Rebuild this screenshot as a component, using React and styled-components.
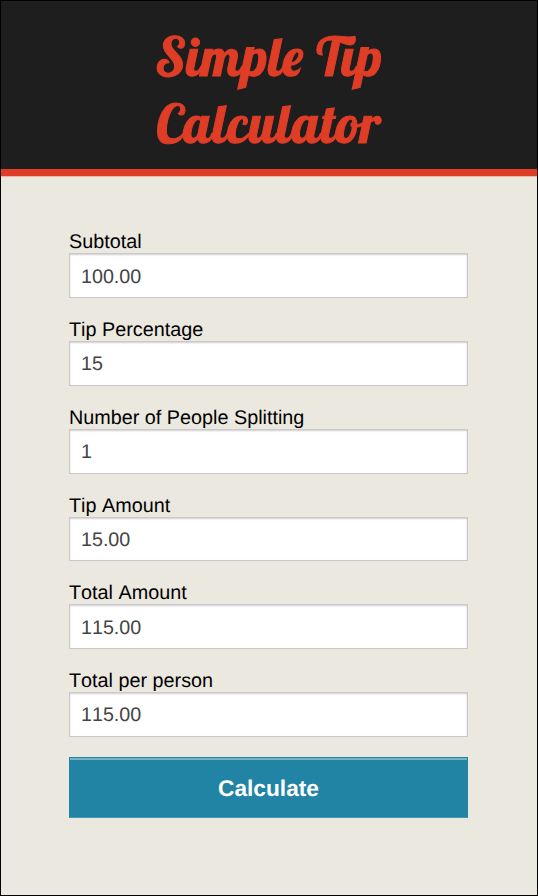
import React from "react";
import styled, { createGlobalStyle } from "styled-components";

const GlobalStyle = createGlobalStyle`
  *, *::before, *::after { box-sizing: border-box; }
  body {
    margin: 0;
    background: #ebe8e0;
    font-family: "Liberation Sans", Arial, sans-serif;
    text-rendering: geometricPrecision;
  }
`;

const Page = styled.main`
  height: 896px;
  border: 1px solid #000;
  background: #ebe8e0;
`;

const Header = styled.header`
  height: 175px;
  padding-top: 23px;
  background: #1e1e1e;
  border-bottom: 7px solid #df3d26;
  box-shadow: 0 1px 0 #ebb5a7;
`;

const Title = styled.h1`
  width: 260px;
  margin: 0 auto;
  font: normal 53.3px/66.6px Lobster, "Liberation Serif", serif;
  letter-spacing: 0.9px;
  font-feature-settings: "liga" 1, "clig" 1;
  -webkit-text-stroke: 1px #df3d26;
  color: #df3d26;
  text-align: center;
`;

const Form = styled.form`
  margin: 0;
  padding: 53.25px 69px 0 68px;
`;

const Field = styled.label`
  display: block;
  height: 87.75px;
`;

const Caption = styled.span`
  display: block;
  height: 24px;
  font-size: 19.8px;
  line-height: 26px;
  font-kerning: none;
  color: #000;
`;

const Input = styled.input`
  display: block;
  width: 399px;
  height: 44.75px;
  margin: 0;
  padding: 3px 11px 0;
  border: 1px solid #c9c9c9;
  border-radius: 0;
  outline: 0;
  background: #fff;
  box-shadow: inset 0 1px 2px rgba(0, 0, 0, 0.2);
  font: 19.7px "Liberation Sans", Arial, sans-serif;
  font-kerning: none;
  text-rendering: inherit;
  color: #444;
`;

const Button = styled.button`
  display: block;
  width: 399px;
  height: 61px;
  margin: 1px 0 0;
  padding: 2px 0 0;
  border: 1px solid #2284a5;
  border-bottom-color: #4699b3;
  border-radius: 0;
  background: #2284a5;
  box-shadow: inset 0 2px 0 #76b3c6;
  font: bold 22.7px "Liberation Sans", Arial, sans-serif;
  text-rendering: inherit;
  color: #fff;
`;

const fields = [
  ["Subtotal", "100.00"],
  ["Tip Percentage", "15"],
  ["Number of People Splitting", "1"],
  ["Tip Amount", "15.00"],
  ["Total Amount", "115.00"],
  ["Total per person", "115.00"],
];

export default function App() {
  return (
    <Page>
      <GlobalStyle />
      <Header>
        <Title>Simple Tip Calculator</Title>
      </Header>
      <Form>
        {fields.map(([name, value]) => (
          <Field key={name}>
            <Caption>{name}</Caption>
            <Input type="text" defaultValue={value} />
          </Field>
        ))}
        <Button type="button">Calculate</Button>
      </Form>
    </Page>
  );
}
